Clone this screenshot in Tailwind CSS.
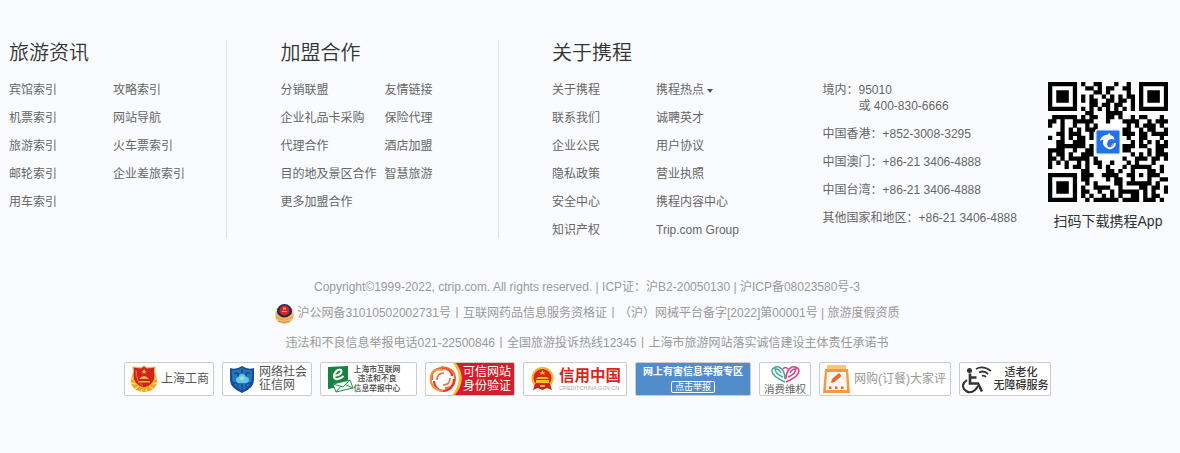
<!DOCTYPE html>
<html lang="zh-CN">
<head>
<meta charset="utf-8">
<title>携程旅行网</title>
<script src="https://cdn.jsdelivr.net/npm/@tailwindcss/browser@4"></script>
</head>
<body class="w-[1180px] h-[453px] overflow-hidden bg-[#f9fbff] font-['Liberation_Sans','Noto_Sans_CJK_SC',sans-serif] text-xs text-[#666]">
<footer class="pt-10">
  <div class="flex h-[198px] pl-[9px] whitespace-nowrap">
    <section class="w-[218px] shrink-0 border-r border-[#dadfe6]">
      <h3 class="h-[42px] pt-px text-xl leading-6 font-[350] text-[#333]">旅游资讯</h3>
      <div class="grid grid-cols-[104px_1fr] auto-rows-[28px] leading-4">
        <a>宾馆索引</a><a>攻略索引</a>
        <a>机票索引</a><a>网站导航</a>
        <a>旅游索引</a><a>火车票索引</a>
        <a>邮轮索引</a><a>企业差旅索引</a>
        <a>用车索引</a>
      </div>
    </section>
    <section class="w-[272px] shrink-0 border-r border-[#dadfe6] pl-[53.5px]">
      <h3 class="h-[42px] pt-px text-xl leading-6 font-[350] text-[#333]">加盟合作</h3>
      <div class="grid grid-cols-[104px_1fr] auto-rows-[28px] leading-4">
        <a>分销联盟</a><a>友情链接</a>
        <a>企业礼品卡采购</a><a>保险代理</a>
        <a>代理合作</a><a>酒店加盟</a>
        <a>目的地及景区合作</a><a>智慧旅游</a>
        <a>更多加盟合作</a>
      </div>
    </section>
    <section class="w-[323.5px] shrink-0 pl-[53px]">
      <h3 class="h-[42px] pt-px text-xl leading-6 font-[350] text-[#333]">关于携程</h3>
      <div class="grid grid-cols-[104px_1fr] auto-rows-[28px] leading-4">
        <a>关于携程</a><a class="flex items-start">携程热点<span class="mt-[7px] ml-[3px] border-x-[3px] border-t-[4px] border-x-transparent border-t-[#555]"></span></a>
        <a>联系我们</a><a>诚聘英才</a>
        <a>企业公民</a><a>用户协议</a>
        <a>隐私政策</a><a>营业执照</a>
        <a>安全中心</a><a>携程内容中心</a>
        <a>知识产权</a><a>Trip.com Group</a>
      </div>
    </section>
    <section class="flex w-[225.5px] shrink-0 flex-col gap-3 pt-[42px] leading-4">
      <p>境内：95010<br><span class="pl-9">或 400-830-6666</span></p>
      <p>中国香港：+852-3008-3295</p>
      <p>中国澳门：+86-21 3406-4888</p>
      <p>中国台湾：+86-21 3406-4888</p>
      <p>其他国家和地区：+86-21 3406-4888</p>
    </section>
    <section class="flex w-[120px] shrink-0 flex-col items-center pt-[42px]">
      <div class="relative size-[120px] bg-white">
        <svg class="size-[120px]" viewBox="0 0 29 29"><path id="qr" fill="#000"/></svg>
        <svg class="absolute top-[47px] left-[47px] size-[26px]" viewBox="0 0 26 26">
          <rect width="26" height="26" rx="2" fill="#e8f2ff"/><rect x="1.500" y="1.500" width="23" height="23" rx="1" fill="#2172e5"/>
          <path d="M5 11.500C6 8 9 6 12 6l2.500-2 1 2.200c2.500.3 4 2.300 4 4.800-3-2-6-.5-7 2-1 3 .5 5.500 3.500 6.500C10 20 6.500 15.500 8.500 11 7 11 6 11.500 5 11.500z" fill="#fff"/>
          <path d="M12 18.500c4 2 8-.5 8-4.500" fill="none" stroke="#fff" stroke-width="1.800"/><path d="M18.500 14.500c0 1-1 2.200-2.500 2.700" fill="none" stroke="#f5b34c" stroke-width="1.500"/>
        </svg>
      </div>
      <p class="mt-[9px] text-sm leading-5 text-[#333]">扫码下载携程App</p>
    </section>
  </div>

  <div class="mt-10 flex w-[1175px] flex-col items-center whitespace-nowrap text-[#999]">
    <p class="h-[26px] pr-px leading-[18px]">Copyright©1999-2022, ctrip.com. All rights reserved. | ICP证：沪B2-20050130 | 沪ICP备08023580号-3</p>
    <p class="flex h-[30px] items-start pr-px leading-[18px]">
      <svg class="mr-[3px] size-5 bg-white" viewBox="0 0 20 20">
        <path d="M2 4Q0 7 0 11q0 8 9.500 9 8.500-1 9.500-9 0-4-2-7z" fill="#f3c277"/>
        <path d="M1 13q8 6 17 0M3 17q6 3 12 0" fill="none" stroke="#d9913c"/>
        <circle cx="9.500" cy="7.500" r="7.500" fill="#202958"/><path d="M2.500 10q6.500 7 14 0l1 3q-8 6-16 0z" fill="#efb358"/>
        <circle cx="9.500" cy="6.500" r="5" fill="#d8242c"/><path d="M8 3.500h3v2H8zM7 7h5v1H7z" fill="#f5a042"/>
      </svg>沪公网备31010502002731号丨互联网药品信息服务资格证丨（沪）网械平台备字[2022]第00001号 | 旅游度假资质
    </p>
    <p class="h-7 pr-px leading-[18px]">违法和不良信息举报电话021-22500846丨全国旅游投诉热线12345丨上海市旅游网站落实诚信建设主体责任承诺书</p>

    <div class="flex h-[34px] gap-2 text-[#555]">
      <div class="flex w-[90px] items-center rounded-xs border border-[#ccc] bg-white pl-[5px]">
        <svg class="mr-[3px] h-7 w-7" viewBox="0 0 28 28">
          <path d="M4 7Q0 13 1 19q4 8 13 8t13-8q1-6-3-12z" fill="#f4a51c"/>
          <path d="M1 13l4 2M1 18l5 1M5 24l4-3M27 13l-4 2M27 18l-5 1M23 24l-4-3M11 27l1-3M17 27l-1-3" stroke="#ffe36e" stroke-width="1.300"/>
          <path d="M14 1l3 2 8-1q-1 4 0 8 0 10-11 13Q3 20 3 10q1-4 0-8l8 1z" fill="#cf231b" stroke="#f8b63a"/>
          <path d="M14 4l1 2h2l-2 1 1 2-2-1-2 1 1-2-2-1h2zM9 14q5-6 10 0zM8 16h12v1.500H8z" fill="#f5b343"/><path d="M6 5q0 12 7 16" fill="none" stroke="#f07553"/>
        </svg>上海工商
      </div>
      <div class="flex w-[90px] items-center rounded-xs border border-[#ccc] bg-white pl-[7px]">
        <svg class="mr-[5px] h-[27px] w-6" viewBox="0 0 24 27">
          <path d="M12 0Q6 4 0 2v12q0 8 12 13 12-5 12-13V2Q18 4 12 0z" fill="#174f92"/>
          <path d="M12 2Q7 5 2 4v9q1 7 10 11 9-4 10-11V4Q17 5 12 2z" fill="#2476b9"/>
          <path d="M4 7h4v3M20 7h-4v3M12 3v4M3 17h5M16 17h5M12 18v5M8 21v-3M16 21v-3" fill="none" stroke="#0b376e"/>
          <path d="M6 14q0-3 3-3 0-3 3-3t4 3q3 0 3 3t-3 3H9q-3 0-3-3z" fill="#5fcae9"/><path d="M9 12l3-2 3 2-3 3z" fill="#a7ddc0"/>
        </svg><span class="leading-[13.500px]">网络社会<br>征信网</span>
      </div>
      <div class="flex w-[97px] items-center rounded-xs border border-[#ccc] bg-white pl-[7px]">
        <svg class="h-7 w-[26px] shrink-0" viewBox="0 0 26 28">
          <path d="M0 2L20 1v19L0 24z" fill="#178342"/><path d="M5.500 11q8-1 8-5-1-3-5 0-4.500 5-1 8 4 1 8-3" fill="none" stroke="#fff" stroke-width="2.200"/>
          <path d="M5 19l17-4 3 8-17 4z" fill="#f5fff5" stroke="#259351"/><path d="M5 19l10 3 7-7M8 27l5-6M25 23l-7-3" fill="none" stroke="#259351"/>
        </svg><span class="w-[46px] shrink-0 text-center text-[7.800px] leading-[9.300px] font-medium text-[#444]"><span class="-mx-1 inline-block">上海市互联网</span><br>违法和不良<br><span class="-mx-1 inline-block">信息举报中心</span></span>
      </div>
      <div class="relative flex w-[90px] items-center justify-end overflow-hidden rounded-xs border border-[#ccc] bg-[#d41e2d] pr-[3px] text-white">
        <svg class="absolute top-0 left-0 h-8 w-10" viewBox="0 0 40 32">
          <path d="M0 0h30q12 16-1 32H0z" fill="#f5bd35"/><path d="M0 0h27q12 16-1 32H0z" fill="#fff"/>
          <g fill="none" stroke-width="2.200"><path d="M6 17Q4 6 16 5q10 1 10 8" stroke="#e2442b"/><path d="M15 4q15 1 14 13-2 9-10 8" stroke="#ee702b"/><path d="M28 16q0 11-11 12-9-2-9-10" stroke="#e33828"/><path d="M17 28Q3 26 5 13q3-9 12-6" stroke="#f49335"/><path d="M11 17q0-7 7-7M24 15q0 7-7 7" stroke="#ee6a2c" stroke-width="1.500"/></g>
        </svg><span class="relative leading-[14px]">可信网站<br>身份验证</span>
      </div>
      <div class="flex w-[104px] items-center rounded-xs border border-[#ccc] bg-white pl-[7px]">
        <svg class="mr-[5px] h-6 w-[23px] shrink-0" viewBox="0 0 23 24">
          <circle cx="11.500" cy="11" r="10" fill="#d9251c" stroke="#eeb331" stroke-width="2"/><path d="M4 17h15l2 6-5-2-4.500 2L7 21l-5 2z" fill="#cf2119"/><path d="M5 13h13v3H5zM7 10h9l2 2H5zM11.500 3l1 2h2L13 6l1 2-2.500-1L9 8l1-2-1.500-1h2zM9 18h5v2H9z" fill="#f6bd32"/>
        </svg><span class="flex flex-col text-[#d9251c]"><b class="text-[15.500px] leading-[17px]">信用中国</b><span class="text-[5.500px] leading-[8px] text-[#aaa]">CREDITCHINA.GOV.CN</span></span>
      </div>
      <div class="flex w-[116px] flex-col items-center rounded-xs border border-[#ccc] bg-[#528dcb] pt-[2px] text-white">
        <b class="text-[10px] leading-[14px]">网上有害信息举报专区</b>
        <span class="mt-[2px] flex h-3 w-11 items-center justify-center rounded-xs border border-white text-[9px] leading-[9px]">点击举报</span>
      </div>
      <div class="flex w-[52px] flex-col items-center rounded-xs border border-[#ccc] bg-white pt-[2px] text-[#666]">
        <svg class="h-[18px] w-[29px] shrink-0" viewBox="0 0 29 18" fill="none" stroke-width="1.500">
          <path d="M14 17Q0 11 1 5q2-4 7-3 6 3 6 12M4 3q0 6 8 9M10 8q-2-4-5-4" stroke="#42ac96"/>
          <path d="M15 17Q29 11 28 5q-2-4-7-3-6 3-6 12M25 3q0 6-8 9M19 8q2-4 5-4M12 4q2-3 5 0" stroke="#df3b8c"/>
        </svg><span class="text-[10.500px] leading-[12px]">消费维权</span>
      </div>
      <div class="flex w-[132px] items-center rounded-xs border border-[#ccc] bg-white pl-[3px] text-[#999]">
        <svg class="mr-1 h-[28px] w-[27px] shrink-0" viewBox="0 0 27 28">
          <path d="M4 0h19v5H4z" fill="#f8c872"/><path d="M2 4h23l2 24H0z" fill="#f39a48"/><path d="M4 7h19l1 18H3z" fill="#fff7ef"/>
          <path d="M8 18l1-4 7-6 2.500 3-7 6z" fill="#ec672b"/><path d="M6 21.500h2.500V24H6zM12 21.500h2.500V24H12zM18 21.500h2.500V24H18z" fill="#ed642e"/>
        </svg><span>网购(订餐)大家评</span>
      </div>
      <div class="flex w-[92px] items-center rounded-xs border border-[#ccc] bg-white pl-[2px] text-[#333]">
        <svg class="h-[29px] w-[31px] shrink-0" viewBox="0 0 31 29" fill="none" stroke="#333">
          <circle cx="7.500" cy="5.500" r="2.500" fill="#333" stroke="none"/><path d="M8 8.500v10h8l4 8M8 12.500h6.500" stroke-width="2.600"/><path d="M5 15q-6 4-3 9 5 6 11 1 2-2 3-4" stroke-width="2"/><path d="M14 4q7-4 15 2M17 7.500q5-2.500 9 1.500M20 11q2-1 4 1" stroke-width="1.800"/>
        </svg><span class="w-[56px] shrink-0 text-center text-[11px] leading-[13px] font-medium">适老化<br>无障碍服务</span>
      </div>
    </div>
  </div>
</footer>
<script>
  const rows = [
    '#######.#..##...#..#..#######',
    '#.....#..##.#.##..##..#.....#',
    '#.###.#....##.#....#..#.###.#',
    '#.###.#.#.#..#.#.#.##.#.###.#',
    '#.###.#.#.##..##.##.#.#.###.#',
    '#.....#...##.##.##..#.#.....#',
    '#######.#.#.#.#.#.#.#.#######',
    '.........##...####...........',
    '.######.#.##..##.#..#.##...#.',
    '##.#..#####...#...####..#.###',
    '#..#..#..#.#.......#.#.###.#.',
    '...#.#.#.###......##..#.##..#',
    '..##.###..#.......###.##.####',
    '#..#.#.##.#........#..##...#.',
    '..##..###...........#.#.#.#.#',
    '..#######.#.......###.##..###',
    '####..#..##.......##....#.##.',
    '#.##.#..###.........#.#.#.###',
    '##.#.#####.#......#..###.##.#',
    '#.#.#..#.#.##..#...#.#...#...',
    '#...#.##.#..#.#...#.#####..#.',
    '........##....##.#..#...##.#.',
    '#######.###..####..##.#.###..',
    '#.....#.##....#.##..#...#..##',
    '#.###.#..#.#....##.######.#..',
    '#.###.#.#..####..#....##.##.#',
    '#.###.#.##..#..#.#####.#.#..#',
    '#.....#.#.#..#.#.#..##.#.##..',
    '#######..#.######.####.###.#.'
  ];
  let d = '';
  rows.forEach((row, y) => [...row].forEach((c, x) => {
    if (c === '#') d += `M${x} ${y}h1.03v1.03h-1.03z`;
  }));
  document.getElementById('qr').setAttribute('d', d);
</script>
</body>
</html>
